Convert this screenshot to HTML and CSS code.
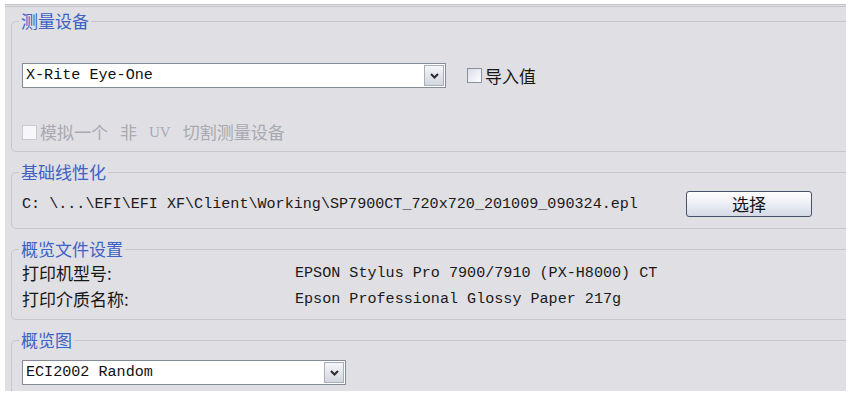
FILE: index.html
```html
<!DOCTYPE html>
<html lang="zh-CN">
<head>
    <meta charset="UTF-8">
    <title>测量设备</title>
    <link rel="stylesheet" href="styles.css">
</head>
<body>
    <div class="panel">
        <fieldset class="group group-device">
            <legend>测量设备</legend>
            <div class="device-row">
                <div class="combo combo-device">
                    <span class="combo-value">X-Rite Eye-One</span>
                    <span class="combo-btn"><svg width="9" height="6" viewBox="0 0 9 6"><path d="M1 1 L4.5 4.5 L8 1" /></svg></span>
                </div>
                <label class="check"><span class="box"></span>导入值</label>
            </div>
            <label class="check check-disabled">
                <span class="box"></span>
                <span>模拟一个</span>
                <span class="sep">非</span>
                <span class="sep latin">UV</span>
                <span class="sep">切割测量设备</span>
            </label>
        </fieldset>

        <fieldset class="group group-base">
            <legend>基础线性化</legend>
            <div class="base-row">
                <span class="mono">C: \...\EFI\EFI XF\Client\Working\SP7900CT_720x720_201009_090324.epl</span>
                <button type="button" class="pick-button">选择</button>
            </div>
        </fieldset>

        <fieldset class="group group-profile">
            <legend>概览文件设置</legend>
            <div class="info">
                <span class="label">打印机型号:</span>
                <span class="mono">EPSON Stylus Pro 7900/7910 (PX-H8000) CT</span>
                <span class="label">打印介质名称:</span>
                <span class="mono">Epson Professional Glossy Paper 217g</span>
            </div>
        </fieldset>

        <fieldset class="group group-chart">
            <legend>概览图</legend>
            <div class="combo combo-chart">
                <span class="combo-value">ECI2002 Random</span>
                <span class="combo-btn"><svg width="9" height="6" viewBox="0 0 9 6"><path d="M1 1 L4.5 4.5 L8 1" /></svg></span>
            </div>
        </fieldset>
    </div>
</body>
</html>
```

FILE: styles.css
```css
body {
    margin: 0;
    background: #ffffff;
    font-family: "Noto Sans CJK SC", "Liberation Sans", sans-serif;
    color: #161616;
}

.panel {
    margin: 4px 6px 0 5px;
    height: 384px;
    background-color: #e0dfe4;
    border-top: 3px double #c4c4ca;
    overflow: hidden;
}

.group {
    margin: 0 -20px 0 6px;
    border: 1px solid #c6c6cc;
    border-radius: 5px;
    padding: 0 10px;
}
.group legend {
    font-size: 17px;
    line-height: 18px;
    color: #3c62c6;
    padding: 0 2px;
    margin-left: -3px;
}

.group-device {
    margin-top: 5px;
    padding-top: 33px;
    padding-bottom: 9px;
}
.group-base {
    margin-top: 11px;
    padding-top: 10px;
    padding-bottom: 11px;
}
.group-profile {
    margin-top: 11px;
    padding-top: 4px;
    padding-bottom: 9px;
}
.group-chart {
    margin-top: 11px;
    padding-top: 11px;
    padding-bottom: 20px;
}

.mono {
    font-family: "Liberation Mono", monospace;
    font-size: 15.1px;
    line-height: 20px;
    color: #1a1a1a;
}

/* combobox */
.combo {
    box-sizing: border-box;
    height: 25px;
    display: flex;
    border: 1px solid #868b98;
    background-color: #ffffff;
}
.combo-device {
    width: 424px;
}
.combo-chart {
    width: 324px;
}
.combo-value {
    flex: 1;
    padding-left: 3px;
    line-height: 23px;
    font-family: "Liberation Mono", monospace;
    font-size: 15.1px;
    color: #111;
}
.combo-btn {
    box-sizing: border-box;
    width: 20px;
    margin: 1px;
    border: 1px solid #a9aebb;
    background: linear-gradient(#f5f6f9, #d3d6df);
    display: flex;
    align-items: center;
    justify-content: center;
}
.combo-btn path {
    fill: none;
    stroke: #2b2b30;
    stroke-width: 2;
}

/* checkbox */
.device-row {
    display: flex;
    align-items: center;
    gap: 21px;
}
.check {
    display: flex;
    align-items: center;
    gap: 3px;
    font-size: 17px;
    line-height: 20px;
}
.box {
    box-sizing: border-box;
    width: 15px;
    height: 15px;
    border: 1px solid #8b909c;
    background: linear-gradient(135deg, #d9dde6, #ffffff);
}
.check-disabled {
    margin-top: 34px;
    color: #a9a9b1;
}
.check-disabled .box {
    border-color: #cacad0;
    background: #f7f7f9;
}
.check-disabled .sep {
    margin-left: 9px;
}
.latin {
    font-family: "Liberation Serif", serif;
    font-size: 15px;
}

/* linearisation row */
.base-row {
    display: grid;
    grid-template-columns: 664px 126px;
    align-items: center;
}
.pick-button {
    box-sizing: border-box;
    height: 26px;
    border: 1px solid #46536b;
    border-radius: 3px;
    background: linear-gradient(#fefeff, #eceef4 50%, #d4d9e5);
    font-family: "Noto Sans CJK SC", sans-serif;
    font-size: 17px;
    line-height: 24px;
    color: #161616;
    padding: 0;
}

/* profile info */
.info {
    display: grid;
    grid-template-columns: 273px 1fr;
    row-gap: 4px;
    line-height: 22px;
    align-items: center;
}
.label {
    font-size: 17px;
}
```
